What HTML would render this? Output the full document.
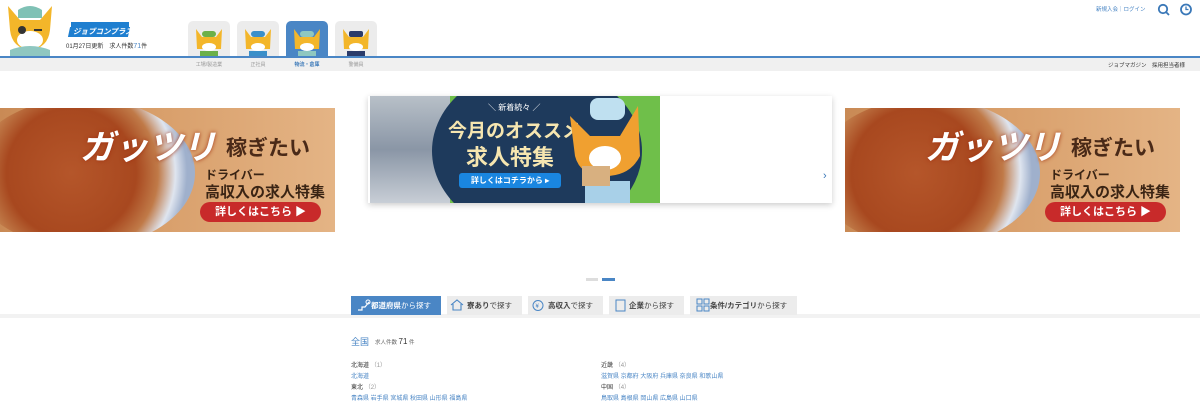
<!DOCTYPE html>
<html><head><meta charset="utf-8"><style>
*{margin:0;padding:0;box-sizing:border-box}
body{width:1200px;height:400px;overflow:hidden;background:#fff;font-family:"Liberation Sans","Noto Sans CJK JP",sans-serif;position:relative;color:#333}
.a{position:absolute}
.tab{position:absolute;top:21px;width:42px;height:37px;background:#ececec;border-radius:5px 5px 0 0}
.tab.on{background:#4a86c5}
.tl{position:absolute;top:61px;font-size:5px;color:#999;width:60px;text-align:center}
.ban{position:absolute;top:108px;width:335px;height:124px;background:linear-gradient(90deg,#c98a55 0%,#d9a06c 50%,#e4b485 100%);overflow:hidden}
.ban .bowl{position:absolute;left:-30px;top:-10px;width:225px;height:150px;border-radius:50%;background:radial-gradient(circle at 45% 50%,#b5562a 0%,#a8481f 45%,#c07a48 60%,#dfe5ef 72%,#9fb0cc 80%)}
.ban .g{position:absolute;left:80px;top:12px;font-size:34px;font-weight:bold;color:#fff;font-style:italic;text-shadow:0 0 4px #a03010;white-space:nowrap}
.ban .k{position:absolute;left:226px;top:24px;font-size:21px;font-weight:bold;color:#4a2a18;white-space:nowrap}
.ban .d{position:absolute;left:205px;top:58px;font-size:12px;font-weight:bold;color:#3a2414;white-space:nowrap}
.ban .h{position:absolute;left:205px;top:73px;font-size:15px;font-weight:bold;color:#3a2414;white-space:nowrap}
.ban .b{position:absolute;left:200px;top:94px;width:121px;height:20px;border-radius:10px;background:#c82a2a;color:#fff;font-size:11px;font-weight:bold;text-align:center;line-height:20px}
.st{position:absolute;top:296px;height:19px;background:#ececec;font-size:7.5px;line-height:19px;color:#444;padding-left:20px;white-space:nowrap}
.reg{font-size:6px;line-height:11px}
.reg b{font-weight:normal;color:#333}
.reg span{color:#4a86c5}
.reg i{font-style:normal;color:#999}
</style></head><body>
<div class="a" style="left:0;top:2px;width:60px;height:55px">
<svg width="60" height="55" viewBox="0 0 60 55"><path d="M8 4 L20 18 L40 18 L52 4 L50 28 Q48 46 30 48 Q12 46 10 28Z" fill="#f3b62a"/><path d="M18 8 Q30 0 42 8 L42 16 L18 16Z" fill="#7fc1b5"/><ellipse cx="30" cy="38" rx="13" ry="9" fill="#fff"/><circle cx="22" cy="28" r="4" fill="#333"/><path d="M34 28 h8" stroke="#333" stroke-width="2"/><path d="M10 48 Q30 40 50 48 L50 55 L10 55Z" fill="#8fc7c0"/></svg></div>
<div class="a" style="left:71px;top:22px;width:58px;height:5px;background:#1f7fd0"></div>
<div class="a" style="left:69px;top:27px;width:60px;height:10px;background:#1f7fd0;transform:skewX(-12deg)"></div>
<div class="a" style="left:73px;top:27px;font-size:7.5px;color:#fff;font-weight:bold;font-style:italic;line-height:10px">ジョブコンプラスD</div>
<div class="a" style="left:66px;top:41px;font-size:6px;color:#333">01月27日更新　求人件数<span style="color:#4a86c5;font-size:7px">71</span>件</div>
<div class="tab" style="left:188px"></div><div class="tab" style="left:237px"></div><div class="tab on" style="left:286px"></div><div class="tab" style="left:335px"></div>
<svg class="a" style="left:188px;top:21px" width="190" height="37"><g fill="#f3b62a"><path d="M8 8 L14 16 L28 16 L34 8 L33 28 L9 28Z"/><path d="M57 8 L63 16 L77 16 L83 8 L82 28 L58 28Z"/><path d="M106 8 L112 16 L126 16 L132 8 L131 28 L107 28Z"/><path d="M155 8 L161 16 L175 16 L181 8 L180 28 L156 28Z"/></g><g fill="#fff"><ellipse cx="21" cy="26" rx="7" ry="4"/><ellipse cx="70" cy="26" rx="7" ry="4"/><ellipse cx="119" cy="26" rx="7" ry="4"/><ellipse cx="168" cy="26" rx="7" ry="4"/></g><g><rect x="14" y="10" width="14" height="6" rx="3" fill="#6bb04a"/><rect x="63" y="10" width="14" height="6" rx="3" fill="#3a8fc9"/><rect x="112" y="10" width="14" height="6" rx="3" fill="#8fc7c0"/><rect x="161" y="10" width="14" height="6" rx="2" fill="#2a3b6a"/><rect x="12" y="30" width="18" height="7" fill="#6bb04a"/><rect x="61" y="30" width="18" height="7" fill="#3a8fc9"/><rect x="110" y="30" width="18" height="7" fill="#8fc7c0"/><rect x="159" y="30" width="18" height="7" fill="#2a3b6a"/></g></svg>
<div class="a" style="left:0;top:56px;width:1200px;height:2px;background:#4a86c5"></div>
<div class="a" style="left:0;top:58px;width:1200px;height:13px;background:#f0f0f0"></div>
<div class="tl" style="left:179px">工場/製造業</div><div class="tl" style="left:228px">正社員</div><div class="tl" style="left:277px;color:#3a78b8;font-weight:bold">物流・倉庫</div><div class="tl" style="left:326px">警備員</div>
<div class="a" style="left:1108px;top:61px;font-size:5.5px;color:#333">ジョブマガジン　採用担当者様</div>
<div class="a" style="left:1096px;top:5px;font-size:5.5px;color:#4a86c5">新規入会｜ログイン</div>
<svg class="a" style="left:1157px;top:3px" width="40" height="13"><circle cx="6" cy="6" r="4.2" fill="none" stroke="#3a78b8" stroke-width="1.8"/><path d="M9 9 L12 12" stroke="#3a78b8" stroke-width="1.8"/><circle cx="29" cy="6.5" r="5" fill="none" stroke="#3a78b8" stroke-width="1.8"/><path d="M29 3.5 V6.5 H31.5" fill="none" stroke="#3a78b8" stroke-width="1.3"/></svg>
<div class="ban" style="left:0"><div class="bowl"></div><div class="g">ガッツリ</div><div class="k">稼ぎたい</div><div class="d">ドライバー</div><div class="h">高収入の求人特集</div><div class="b">詳しくはこちら ▶</div></div>
<div class="ban" style="left:845px"><div class="bowl"></div><div class="g">ガッツリ</div><div class="k">稼ぎたい</div><div class="d">ドライバー</div><div class="h">高収入の求人特集</div><div class="b">詳しくはこちら ▶</div></div>
<div class="a" style="left:368px;top:96px;width:464px;height:107px;background:#fff;box-shadow:0 2px 6px rgba(0,0,0,.2)"></div>
<div class="a" style="left:370px;top:96px;width:290px;height:107px;overflow:hidden;background:#6fbf4a">
<div class="a" style="left:0;top:0;width:80px;height:107px;background:linear-gradient(180deg,#b8c0c8,#8a96a6 50%,#c8ced6)"></div>
<div class="a" style="left:62px;top:-30px;width:210px;height:170px;border-radius:50%;background:#1e3a5c"></div>
<div class="a" style="left:118px;top:6px;font-size:8px;color:#fff">＼ 新着続々 ／</div>
<div class="a" style="left:78px;top:20px;font-size:19px;color:#f6e6b0;font-weight:bold;white-space:nowrap">今月のオススメ</div>
<div class="a" style="left:96px;top:44px;font-size:22px;color:#f6e6b0;font-weight:bold">求人特集</div>
<div class="a" style="left:89px;top:77px;width:102px;height:15px;border-radius:3px;background:#1a86e0;color:#fff;font-size:8px;line-height:15px;text-align:center;font-weight:bold">詳しくはコチラから ▸</div>
<svg class="a" style="left:190px;top:0" width="100" height="107"><path d="M10 20 L30 40 L60 40 L78 10 L80 60 Q70 80 45 80 Q20 80 15 60Z" fill="#f0a030"/><rect x="30" y="2" width="35" height="22" rx="8" fill="#bfe0f0"/><ellipse cx="45" cy="62" rx="16" ry="12" fill="#fff"/><rect x="25" y="85" width="45" height="22" fill="#a8d0e8"/><rect x="22" y="70" width="28" height="20" fill="#d8b080"/></svg>
</div>
<div class="a" style="left:823px;top:170px;font-size:11px;color:#3a78b8">›</div>
<div class="a" style="left:586px;top:278px;width:12px;height:3px;background:#ddd"></div>
<div class="a" style="left:602px;top:278px;width:13px;height:3px;background:#4a86c5"></div>
<div class="a" style="left:0;top:314px;width:1200px;height:4px;background:#f2f2f2"></div>
<div class="st" style="left:351px;width:90px;background:#4a86c5;color:#fff"><b>都道府県</b>から探す</div>
<div class="st" style="left:447px;width:75px"><b>寮あり</b>で探す</div>
<div class="st" style="left:528px;width:75px"><b>高収入</b>で探す</div>
<div class="st" style="left:609px;width:75px"><b>企業</b>から探す</div>
<div class="st" style="left:690px;width:107px"><b>条件/カテゴリ</b>から探す</div>
<svg class="a" style="left:354px;top:298px" width="440" height="15"><path d="M4 12 h4 v-3 h3 l4 -5" stroke="#fff" fill="none" stroke-width="1.2"/><circle cx="14" cy="4" r="2" fill="none" stroke="#fff"/><path d="M97 7 l6 -5 l6 5 M99 6 v6 h8 v-6" stroke="#4a86c5" fill="none" stroke-width="1.1"/><circle cx="184" cy="7.5" r="5" fill="none" stroke="#4a86c5"/><text x="181.5" y="10" font-size="6" fill="#4a86c5">¥</text><rect x="262" y="2" width="9" height="11" fill="none" stroke="#4a86c5"/><g fill="none" stroke="#4a86c5"><rect x="343" y="1" width="5" height="5"/><rect x="350" y="1" width="5" height="5"/><rect x="343" y="8" width="5" height="5"/><rect x="350" y="8" width="5" height="5"/></g></svg>
<div class="a" style="left:351px;top:335px;font-size:9px;color:#4a86c5">全国</div>
<div class="a" style="left:375px;top:337px;font-size:5.5px;color:#666">求人件数 <span style="font-size:8px;color:#333">71</span> 件</div>
<div class="a reg" style="left:351px;top:361px"><b>北海道</b> <i>（1）</i><br><span>北海道</span><br><b>東北</b> <i>（2）</i><br><span>青森県 岩手県 宮城県 秋田県 山形県 福島県</span></div>
<div class="a reg" style="left:601px;top:361px"><b>近畿</b> <i>（4）</i><br><span>滋賀県 京都府 大阪府 兵庫県 奈良県 和歌山県</span><br><b>中国</b> <i>（4）</i><br><span>鳥取県 島根県 岡山県 広島県 山口県</span></div>
</body></html>
